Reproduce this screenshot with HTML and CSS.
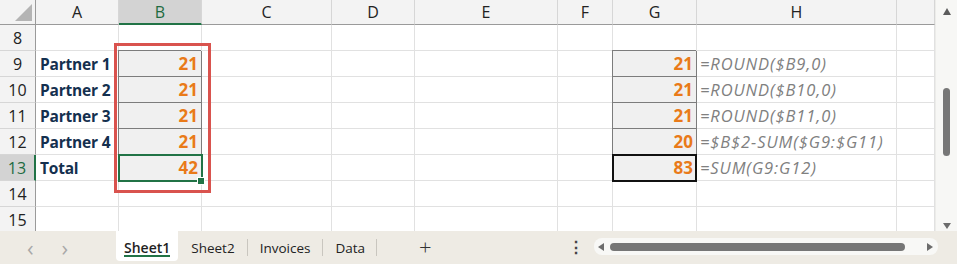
FILE: index.html
```html
<!DOCTYPE html>
<html lang="en">
<head>
  <meta charset="UTF-8">
  <title>Partner split</title>
  <link rel="stylesheet" href="styles.css">
</head>
<body>
  <div class="window">
    <div class="sheet">
      <div class="grid">
        <div class="hd corner"><span class="tri"></span></div>
        <div class="hd">A</div>
        <div class="hd sel-col">B</div>
        <div class="hd">C</div>
        <div class="hd">D</div>
        <div class="hd">E</div>
        <div class="hd">F</div>
        <div class="hd">G</div>
        <div class="hd">H</div>
        <div class="hd"></div>

        <div class="rh">8</div>
        <div class="c"></div><div class="c"></div><div class="c"></div><div class="c"></div><div class="c"></div><div class="c"></div><div class="c"></div><div class="c"></div><div class="c"></div>

        <div class="rh">9</div>
        <div class="c label">Partner 1</div>
        <div class="c num boxed">21</div>
        <div class="c"></div><div class="c"></div><div class="c"></div><div class="c"></div>
        <div class="c num boxed">21</div>
        <div class="c formula">=ROUND($B9,0)</div>
        <div class="c"></div>

        <div class="rh">10</div>
        <div class="c label">Partner 2</div>
        <div class="c num boxed">21</div>
        <div class="c"></div><div class="c"></div><div class="c"></div><div class="c"></div>
        <div class="c num boxed">21</div>
        <div class="c formula">=ROUND($B10,0)</div>
        <div class="c"></div>

        <div class="rh">11</div>
        <div class="c label">Partner 3</div>
        <div class="c num boxed">21</div>
        <div class="c"></div><div class="c"></div><div class="c"></div><div class="c"></div>
        <div class="c num boxed">21</div>
        <div class="c formula">=ROUND($B11,0)</div>
        <div class="c"></div>

        <div class="rh">12</div>
        <div class="c label">Partner 4</div>
        <div class="c num boxed">21</div>
        <div class="c"></div><div class="c"></div><div class="c"></div><div class="c"></div>
        <div class="c num boxed">20</div>
        <div class="c formula">=$B$2-SUM($G9:$G11)</div>
        <div class="c"></div>

        <div class="rh sel-row">13</div>
        <div class="c label">Total</div>
        <div class="c num boxed active">42</div>
        <div class="c"></div><div class="c"></div><div class="c"></div><div class="c"></div>
        <div class="c num boxed total">83</div>
        <div class="c formula">=SUM(G9:G12)</div>
        <div class="c"></div>

        <div class="rh">14</div>
        <div class="c"></div><div class="c"></div><div class="c"></div><div class="c"></div><div class="c"></div><div class="c"></div><div class="c"></div><div class="c"></div><div class="c"></div>

        <div class="rh">15</div>
        <div class="c"></div><div class="c"></div><div class="c"></div><div class="c"></div><div class="c"></div><div class="c"></div><div class="c"></div><div class="c"></div><div class="c"></div>

        <div class="mark"></div>
      </div>
      <div class="vscroll">
        <span class="arrow up"></span>
        <span class="vthumb"></span>
        <span class="arrow down"></span>
      </div>
    </div>

    <div class="tabbar">
      <div class="nav">
        <span class="chev">&lsaquo;</span>
        <span class="chev">&rsaquo;</span>
      </div>
      <div class="tabs">
        <span class="tab current">Sheet1</span>
        <span class="tab">Sheet2</span>
        <span class="tab">Invoices</span>
        <span class="tab">Data</span>
      </div>
      <span class="add">+</span>
      <span class="dots">&#8942;</span>
      <div class="hscroll">
        <span class="arrow left"></span>
        <span class="hthumb"></span>
        <span class="arrow right"></span>
      </div>
    </div>
  </div>
</body>
</html>
```

FILE: styles.css
```css
* {
  box-sizing: border-box;
}

body {
  margin: 0;
  background: #ffffff;
  font-family: "Open Sans", "Liberation Sans", sans-serif;
}

.window {
  width: 957px;
  height: 264px;
  display: flex;
  flex-direction: column;
  overflow: hidden;
}

.sheet {
  height: 232px;
  display: flex;
  overflow: hidden;
}

.grid {
  position: relative;
  display: grid;
  grid-template-columns: 36px 83px 83px 130px 83px 143px 55px 84px 200px 38px;
  grid-template-rows: 25px repeat(8, 26px);
  width: 935px;
  align-content: start;
}

.hd {
  background: #f3f3f3;
  border-right: 1px solid #d6d6d6;
  border-bottom: 1px solid #9a9a9a;
  color: #222;
  font-size: 16px;
  display: flex;
  align-items: center;
  justify-content: center;
}

.corner {
  position: relative;
  border-right: 1px solid #9a9a9a;
}

.tri {
  position: absolute;
  right: 3px;
  bottom: 3px;
  width: 0;
  height: 0;
  border-left: 17px solid transparent;
  border-bottom: 17px solid #b4b4b4;
}

.sel-col {
  background: #d3d3d3;
  color: #1e6b41;
  border-bottom: 2px solid #217346;
}

.rh {
  background: #f3f3f3;
  border-right: 1px solid #9a9a9a;
  border-bottom: 1px solid #d6d6d6;
  color: #222;
  font-size: 16px;
  display: flex;
  align-items: center;
  justify-content: center;
}

.sel-row {
  background: #d3d3d3;
  color: #1e6b41;
  border-right: 2px solid #217346;
}

.c {
  border-right: 1px solid #e1e1e1;
  border-bottom: 1px solid #e1e1e1;
  display: flex;
  align-items: center;
  padding: 0 4px;
  font-size: 16px;
  white-space: nowrap;
}

.label {
  color: #14304f;
  font-weight: 700;
  font-size: 15.5px;
  letter-spacing: -0.2px;
}

.num {
  justify-content: flex-end;
  color: #e97a19;
  font-weight: 700;
  font-size: 17px;
  padding-right: 3px;
}

.boxed {
  background: #f0f0f0;
  border-right-color: #7c7c7c;
  border-bottom-color: #7c7c7c;
  box-shadow: -1px -1px 0 #7c7c7c;
}

.formula {
  color: #808080;
  font-style: italic;
  font-size: 16.5px;
  letter-spacing: 0.9px;
  padding-left: 3px;
  overflow: visible;
}

.active {
  position: relative;
}

.active::after {
  content: "";
  position: absolute;
  top: -1px;
  left: -1px;
  right: -2px;
  bottom: -2px;
  border: 2px solid #217346;
}

.active::before {
  content: "";
  position: absolute;
  right: -4px;
  bottom: -5px;
  width: 6px;
  height: 6px;
  background: #217346;
  border: 1px solid #fff;
  z-index: 2;
}

.total {
  position: relative;
}

.total::after {
  content: "";
  position: absolute;
  top: -1px;
  left: -1px;
  right: -1px;
  bottom: -2px;
  border: 2px solid #111;
}

.mark {
  position: absolute;
  left: 114px;
  top: 43px;
  width: 97px;
  height: 150px;
  border: 3px solid #d9534e;
  pointer-events: none;
}

.vscroll {
  width: 22px;
  background: #f7f7f5;
  border-left: 1px solid #ecece9;
  position: relative;
}

.arrow {
  position: absolute;
  width: 0;
  height: 0;
}

.arrow.up {
  left: 7px;
  top: 8px;
  border-left: 4px solid transparent;
  border-right: 4px solid transparent;
  border-bottom: 7px solid #5c5c5c;
}

.arrow.down {
  left: 7px;
  top: 223px;
  border-left: 4px solid transparent;
  border-right: 4px solid transparent;
  border-top: 6px solid #6c6c6c;
}

.vthumb {
  position: absolute;
  left: 7px;
  top: 88px;
  width: 7px;
  height: 68px;
  border-radius: 4px;
  background: #777;
}

.tabbar {
  flex: 1;
  background: #eeebe4;
  display: flex;
  align-items: stretch;
  font-size: 13.5px;
  color: #222;
}

.nav {
  width: 116px;
  display: flex;
  align-items: center;
  gap: 28px;
  padding-left: 27px;
  padding-bottom: 1px;
}

.chev {
  color: #a8a8a8;
  font-size: 22px;
  line-height: 1;
}

.tabs {
  display: flex;
  height: 30px;
}

.tab {
  display: flex;
  align-items: center;
  padding: 3px 12px 0 13px;
  position: relative;
}

.tab + .tab::before {
  content: "";
  position: absolute;
  left: 0;
  top: 8px;
  height: 17px;
  border-left: 1px solid #c9c6bf;
}

.tab.current {
  background: #fff;
  padding: 2px 8px 0 8px;
  border-radius: 0 0 4px 4px;
  font-size: 14px;
  font-weight: 600;
  color: #1f1f1f;
}

.tab.current::after {
  content: "";
  position: absolute;
  left: 8px;
  right: 8px;
  bottom: 4px;
  border-bottom: 2px solid #217346;
}

.tab.current + .tab {
  padding-left: 13px;
}

.tab.current + .tab::before {
  display: none;
}

.tab:last-child::after {
  content: "";
  position: absolute;
  right: 0;
  top: 8px;
  height: 17px;
  border-left: 1px solid #c9c6bf;
}

.add {
  margin-left: 42px;
  font-size: 22px;
  font-weight: 300;
  color: #333;
  display: flex;
  align-items: center;
  padding-bottom: 3px;
}

.dots {
  margin-left: 136px;
  display: flex;
  align-items: center;
  font-size: 16px;
  font-weight: 700;
  color: #444;
  padding-bottom: 1px;
}

.hscroll {
  position: relative;
  margin: 7px 0 0 10px;
  width: 344px;
  height: 17px;
  border-radius: 8px;
  background: #f8f8f6;
}

.arrow.left {
  left: 4px;
  top: 5px;
  border-top: 4px solid transparent;
  border-bottom: 4px solid transparent;
  border-right: 6px solid #6c6c6c;
}

.arrow.right {
  left: 333px;
  top: 5px;
  border-top: 4px solid transparent;
  border-bottom: 4px solid transparent;
  border-left: 6px solid #6c6c6c;
}

.hthumb {
  position: absolute;
  left: 16px;
  top: 5px;
  width: 295px;
  height: 8px;
  border-radius: 4px;
  background: #767676;
}
```
